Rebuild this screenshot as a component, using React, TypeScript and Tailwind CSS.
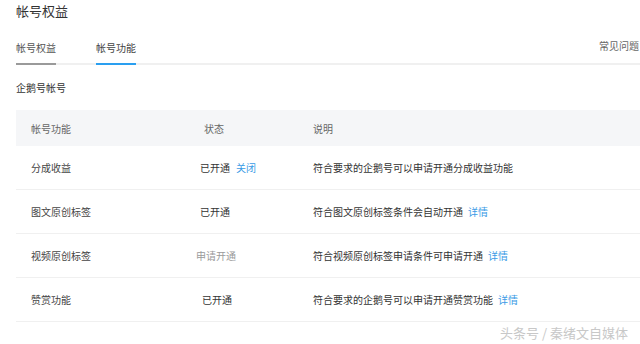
import React from "react";

type Row = {
  name: string;
  status: React.ReactNode;
  desc: string;
  link?: boolean;
};

const rows: Row[] = [
  {
    name: "分成收益",
    status: (
      <span className="text-[#333]">
        已开通<span className="ml-[6px] text-[#3a9be6]">关闭</span>
      </span>
    ),
    desc: "符合要求的企鹅号可以申请开通分成收益功能",
  },
  {
    name: "图文原创标签",
    status: <span className="text-[#333]">已开通</span>,
    desc: "符合图文原创标签条件会自动开通",
    link: true,
  },
  {
    name: "视频原创标签",
    status: <span className="-ml-[4px] text-[#9a9a9a]">申请开通</span>,
    desc: "符合视频原创标签申请条件可申请开通",
    link: true,
  },
  {
    name: "赞赏功能",
    status: <span className="ml-[2px] text-[#333]">已开通</span>,
    desc: "符合要求的企鹅号可以申请开通赞赏功能",
    link: true,
  },
];

export default function App() {
  return (
    <div
      className="relative h-[344px] w-[640px] overflow-hidden bg-white pl-4"
      style={{ fontFamily: '"Noto Sans CJK SC", "Noto Sans", sans-serif' }}
    >
      <div className="h-[22px] text-[13px] leading-[22px] text-[#333]">帐号权益</div>

      {/* tabs */}
      <div className="mt-[15px] flex items-end border-b-2 border-[#f0f0f0] text-[10px] leading-[18px]">
        <div className="-mb-[2px] border-b-2 border-[#9a9a9a] pb-[6px] text-[#555]">帐号权益</div>
        <div className="-mb-[2px] ml-[40px] border-b-2 border-[#2a9ff0] pb-[6px] text-[#444]">帐号功能</div>
        <div className="mb-[8px] ml-auto pr-[1px] text-[#666]">常见问题</div>
      </div>

      <div className="mt-[14px] text-[10px] leading-[18px] text-[#333]">企鹅号帐号</div>

      {/* table */}
      <div className="mt-[13px] text-[10px]">
        <div className="grid h-[36px] grid-cols-[184px_113px_1fr] items-center bg-[#f5f6f8] text-[#666]">
          <div className="pl-[15px]">帐号功能</div>
          <div className="pl-[4px]">状态</div>
          <div>说明</div>
        </div>
        {rows.map((r) => (
          <div
            key={r.name}
            className="grid h-[44px] grid-cols-[184px_113px_1fr] items-center border-b border-[#f0f0f0] text-[#333]"
          >
            <div className="pl-[15px] text-[#444]">{r.name}</div>
            <div className="flex">{r.status}</div>
            <div>
              {r.desc}
              {r.link && <span className="ml-[5px] text-[#3a9be6]">详情</span>}
            </div>
          </div>
        ))}
      </div>

      <div className="absolute bottom-[3px] right-[12px] text-[13px] leading-[16px] text-[#c8c8c8]">
        头条号 / 秦绪文自媒体
      </div>
    </div>
  );
}
